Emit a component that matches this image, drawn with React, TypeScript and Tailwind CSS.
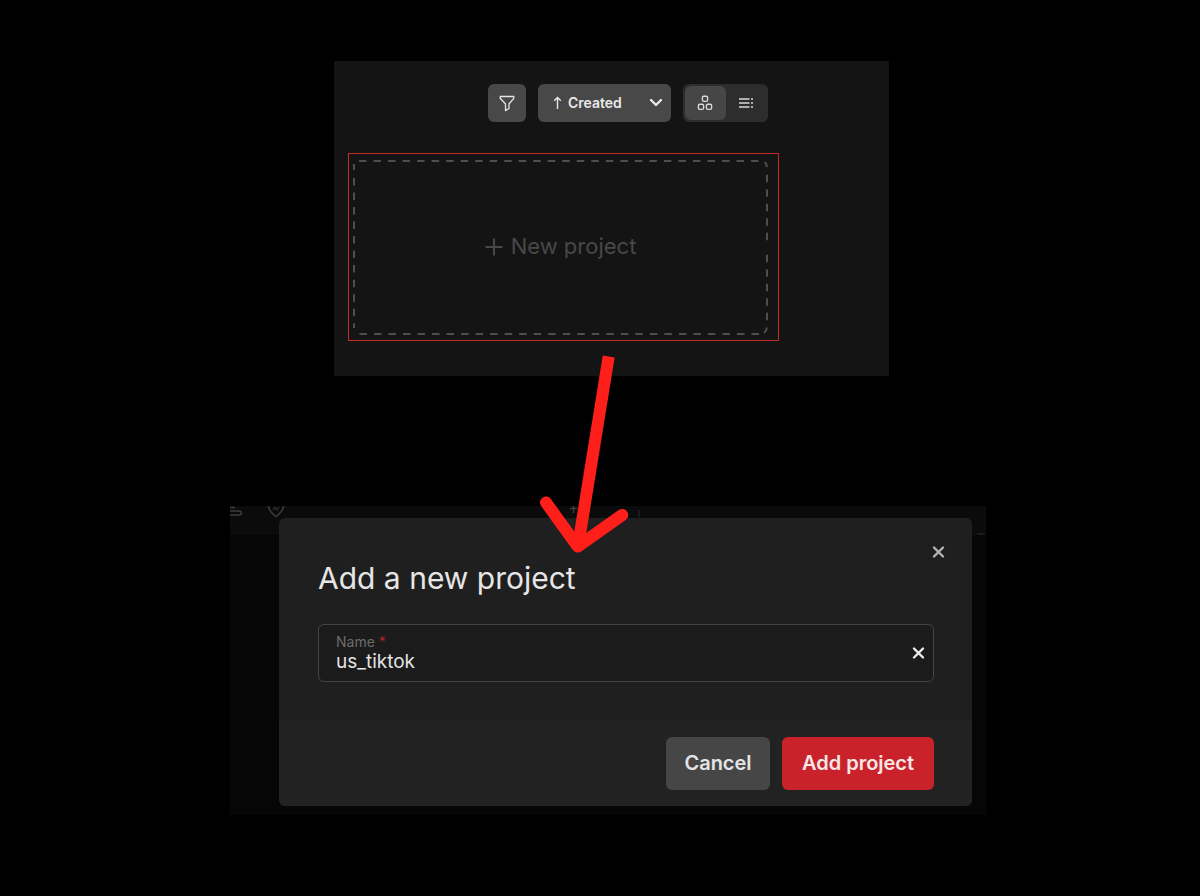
import { useState } from "react";

export default function App() {
  return (
    <main className="min-h-screen bg-black pt-[61px] pb-20 pl-4 font-['Inter',sans-serif]">
      <div className="relative mx-auto flex w-full max-w-[756px] flex-col gap-[130px]">
        <ProjectsPanel />
        <DialogScene />
        <PointerArrow />
      </div>
    </main>
  );
}

function ProjectsPanel() {
  const [view, setView] = useState<"grid" | "list">("grid");

  return (
    <section className="mr-[97px] ml-[104px] bg-[#141414] pt-[23px] pr-[110px] pb-[35px] pl-[14px]">
      <div className="flex justify-end gap-3 pr-[11px]">
        <button
          type="button"
          aria-label="Filter"
          className="flex size-[38px] items-center justify-center rounded-md bg-[#484848] text-[#e4e4e4]"
        >
          <FilterIcon />
        </button>

        <div className="relative w-[133px] text-[#e8e8e8]">
          <select
            aria-label="Sort by"
            className="h-[38px] w-full appearance-none rounded-md bg-[#484848] pl-[30px] text-sm font-semibold"
          >
            <option>Created</option>
          </select>
          <svg
            className="pointer-events-none absolute top-3 left-3.5"
            width="11"
            height="14"
            viewBox="0 0 11 14"
            fill="none"
            stroke="currentColor"
            strokeWidth="1.4"
          >
            <path d="M5.500 13V1.500M2.200 4.800l3.300-3.300 3.300 3.300" />
          </svg>
          <svg
            className="pointer-events-none absolute top-3.5 right-2"
            width="14"
            height="10"
            viewBox="0 0 14 10"
            fill="none"
            stroke="currentColor"
            strokeWidth="2.4"
            strokeLinecap="round"
            strokeLinejoin="round"
          >
            <path d="m2 2 5 5 5-5" />
          </svg>
        </div>

        <div className="flex h-[38px] rounded-md bg-[#2d2d2d] p-0.5 text-[#d8d8d8]">
          <button
            type="button"
            aria-label="Grid view"
            aria-pressed={view === "grid"}
            onClick={() => setView("grid")}
            className="flex w-[41px] items-center justify-center rounded-md pr-0.5 aria-pressed:bg-[#464646]"
          >
            <GridIcon />
          </button>
          <button
            type="button"
            aria-label="List view"
            aria-pressed={view === "list"}
            onClick={() => setView("list")}
            className="flex w-10 items-center justify-center rounded-md aria-pressed:bg-[#464646]"
          >
            <ListIcon />
          </button>
        </div>
      </div>

      <div className="mt-[31px] border border-[#c22c27] pt-1.5 pr-2.5 pb-[5px] pl-1">
        <button
          type="button"
          className="relative flex h-[175px] w-full items-center justify-center gap-2 pb-0.5 text-[22px] text-[#484848]"
        >
          <DashedFrame />
          <svg width="18" height="18" viewBox="0 0 18 18" stroke="currentColor" strokeWidth="2">
            <path d="M9 .5v17M.5 9h17" />
          </svg>
          New project
        </button>
      </div>
    </section>
  );
}

function DialogScene() {
  const [name, setName] = useState("us_tiktok");

  return (
    <section className="relative overflow-hidden bg-[#060606] pt-3 pr-[14px] pb-[9px] pl-[49px]">
      {/* App header dimmed behind the dialog */}
      <div className="absolute inset-x-0 top-0 h-[29px] bg-[#0b0b0b] text-[#3c3c3c]">
        <DimmedHeaderIcons />
      </div>

      <div
        role="dialog"
        aria-labelledby="dialog-title"
        className="relative overflow-hidden rounded-md bg-[#1f1f1f]"
      >
        <button
          type="button"
          aria-label="Close"
          className="absolute top-[27px] right-[27px] text-[#b4b4b4]"
        >
          <CrossIcon />
        </button>

        <div className="pt-10 pr-[38px] pb-[38px] pl-[39px]">
          <h2 id="dialog-title" className="text-[30px] leading-10 text-[#e6e6e6]">
            Add a new project
          </h2>

          <div className="relative mt-[26px] flex h-[58px] flex-col justify-center rounded-md border border-[#454545] bg-[#1b1b1b] px-[17px] pt-0.5">
            <label htmlFor="project-name" className="text-sm leading-4 text-[#6c6c6c]">
              Name <span className="text-[#a02a2a]">*</span>
            </label>
            <input
              id="project-name"
              type="text"
              value={name}
              onChange={(e) => setName(e.target.value)}
              className="h-6 w-full bg-transparent pr-8 text-[19px] text-[#e4e4e4] outline-none"
            />
            <button
              type="button"
              aria-label="Clear name"
              onClick={() => setName("")}
              className="absolute top-[21px] right-2 text-[#ececec]"
            >
              <CrossIcon />
            </button>
          </div>
        </div>

        <div className="flex justify-end gap-3 bg-[#222222] pt-[17px] pr-[38px] pb-4 pl-[39px] text-xl font-semibold">
          <button
            type="button"
            className="h-[53px] w-[104px] rounded-md bg-[#464646] pb-0.5 text-[#e4e4e4]"
          >
            Cancel
          </button>
          <button
            type="button"
            className="h-[53px] w-[152px] rounded-md bg-[#c9222b] pb-0.5 text-[#f6e6e6]"
          >
            Add project
          </button>
        </div>
      </div>
    </section>
  );
}

function PointerArrow() {
  return (
    <svg
      className="pointer-events-none absolute top-[289px] left-[304px]"
      width="100"
      height="210"
      viewBox="0 0 100 210"
      fill="none"
      stroke="#ff1f1a"
      strokeWidth="12"
    >
      <path d="M74.7 6.5 44 196.5" />
      <path d="m12 152.5 31.7 44L88.2 165" strokeLinecap="round" strokeLinejoin="round" />
    </svg>
  );
}

function DashedFrame() {
  return (
    <svg
      className="absolute inset-0 size-full"
      viewBox="0 0 415 175"
      preserveAspectRatio="none"
      fill="none"
      stroke="#4e4e4e"
      strokeWidth="2"
    >
      <g strokeDasharray="7.5 7.02">
        <path d="M6 1h400" />
        <path d="M414 14.700V82" />
        <path d="M414 94.700V161" />
        <path d="M406 174H6" />
        <path d="M1 18v150" />
      </g>
      <path d="M411.500 2q2 1.500 2.500 5M414 167.500q-.5 3.500-3 5.500M1 4v6" />
    </svg>
  );
}

function FilterIcon() {
  return (
    <svg
      width="16"
      height="17"
      viewBox="0 0 16 17"
      fill="none"
      stroke="currentColor"
      strokeWidth="1.3"
      strokeLinejoin="round"
    >
      <path d="M1.200 1.500h13.600v1.800L10 9v4.500L6.500 15.600V9L1.200 3.300z" />
    </svg>
  );
}

function GridIcon() {
  return (
    <svg width="16" height="16" viewBox="0 0 16 16" fill="none" stroke="currentColor" strokeWidth="1.4">
      <rect x="5.400" y="1.200" width="5.200" height="5.200" rx="1.400" />
      <rect x="1.400" y="9.200" width="5.200" height="5.200" rx="1.400" />
      <rect x="9.400" y="9.200" width="5.200" height="5.200" rx="1.400" />
    </svg>
  );
}

function ListIcon() {
  return (
    <svg width="16" height="12" viewBox="0 0 16 12" stroke="currentColor" strokeWidth="1.6">
      <path d="M1 2h10.500M1 6h10.500M1 10h10.500M13 2h2M13 6h2M13 10h2" />
    </svg>
  );
}

function CrossIcon() {
  return (
    <svg
      width="14"
      height="14"
      viewBox="0 0 14 14"
      stroke="currentColor"
      strokeWidth="2.4"
      strokeLinecap="round"
    >
      <path d="m3 2.500 9 9M12 2.500l-9 9" />
    </svg>
  );
}

function DimmedHeaderIcons() {
  return (
    <svg className="size-full" fill="none" stroke="currentColor" strokeWidth="1.5">
      <path d="M0 1.500h5M0 5h8.500q3 0 3 2t-3 2H0" />
      <path d="M38.500 0q0 5 7.500 10.500Q53.500 5 53.500 0" />
      <path d="m43 4 2-3 1.500 3L49 1" strokeWidth="1" />
      <path d="M340 2.500h7M343.500 0v7" />
      <path d="M409 4v7" stroke="#222222" />
      <path d="M747 28h8" stroke="#222222" />
    </svg>
  );
}
